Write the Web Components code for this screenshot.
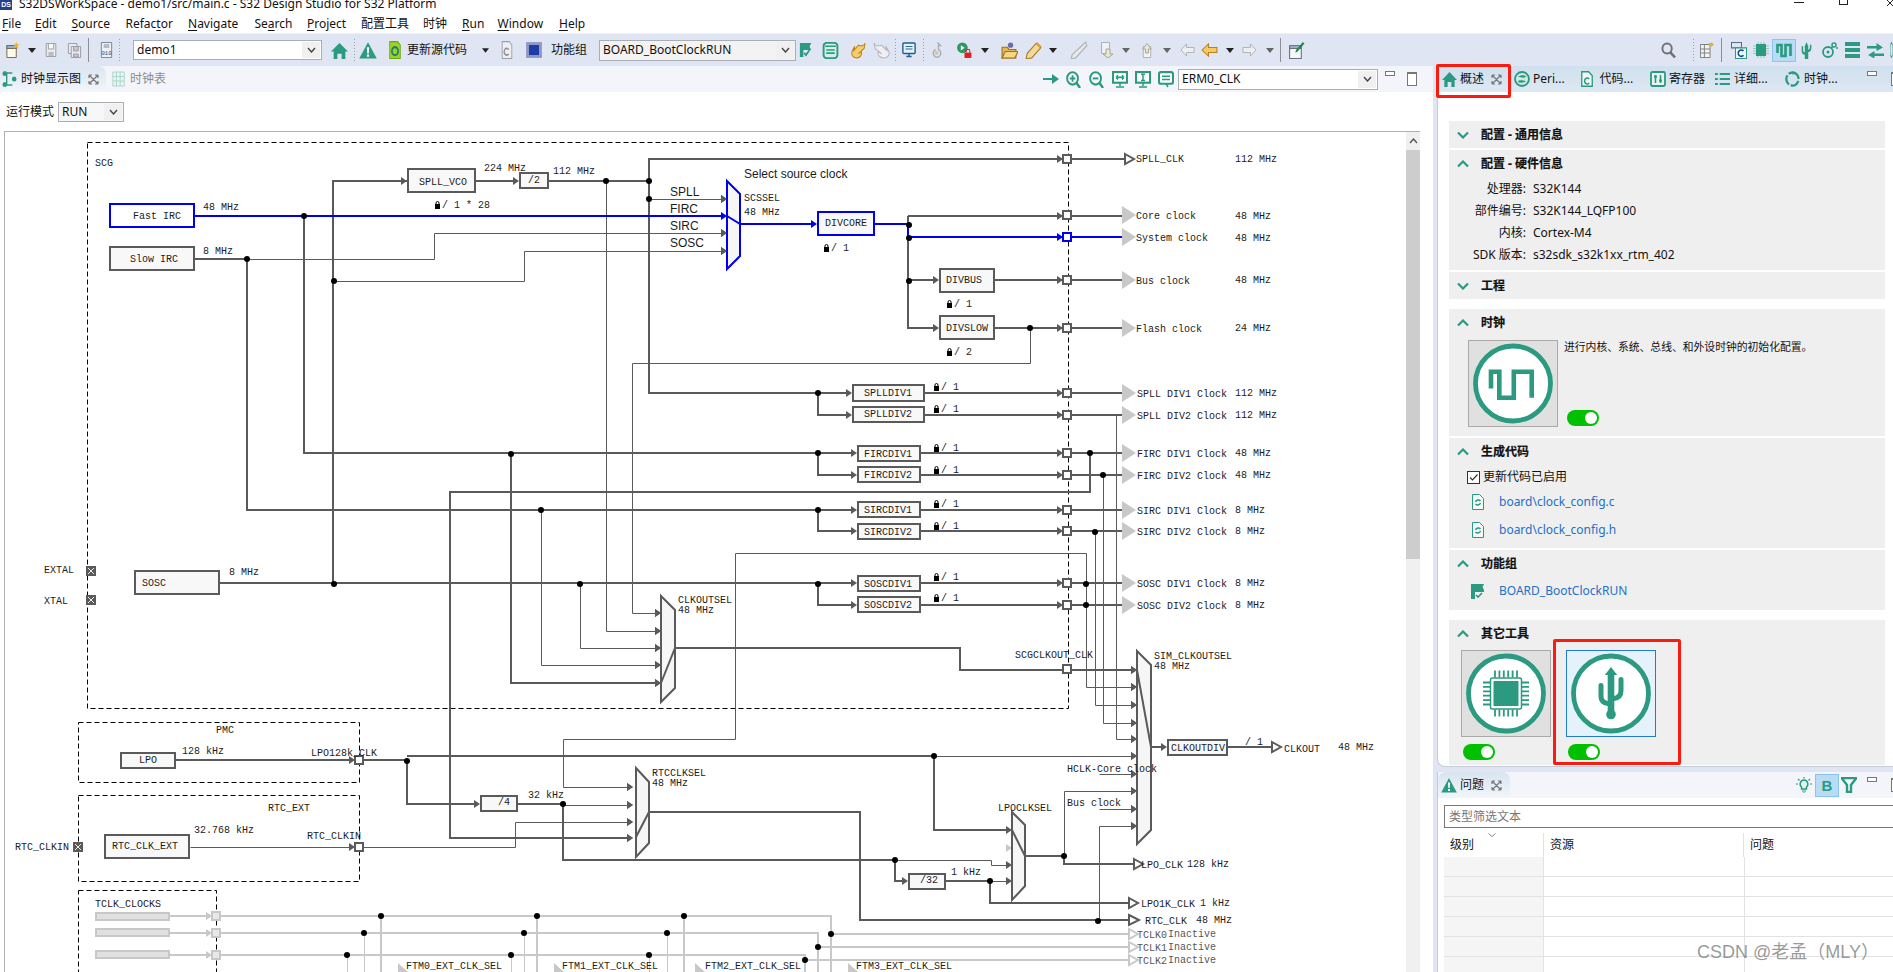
<!DOCTYPE html>
<html lang="zh">
<head>
<meta charset="utf-8">
<title>S32DS</title>
<style>
html{margin:0;padding:0;height:972px;overflow:hidden;background:#fff}
body{margin:0;padding:0;height:972px;overflow:hidden;font:12px/16px "Noto Sans","Noto Sans CJK SC",sans-serif;color:#111;display:flex;flex-direction:column}
</style>
</head>
<body>
<win-title></win-title>
<win-menu></win-menu>
<win-toolbar></win-toolbar>
<work-area>
  <clock-editor></clock-editor>
  <side-column>
    <overview-view></overview-view>
    <problems-view></problems-view>
  </side-column>
</work-area>
<script>
const T='#2b9a80';
const IC={
 newf:`<path d="M2 3.5h10v12H2z" fill="#fffbe8" stroke="#6f6a55"/><path d="M2 3.5h10v3H2z" fill="#8fb0d6" stroke="#6f6a55"/><path d="M12 0l1 2.3 2.4.5-1.9 1.5.5 2.4-2-1.3-2 1.3.5-2.4L8.600 2.800l2.400-.5z" fill="#efb21e"/>`,
 save:`<path d="M2.500 1.500h11v13h-11z" fill="#e9ebf0" stroke="#9a9da3"/><path d="M5 2v5h6V2" fill="#f8f8f8" stroke="#9a9da3"/><path d="M5 10h6v4H5z" fill="#b9bcc2"/>`,
 saveall:`<path d="M1.500 1.500h9v10h-9z" fill="#e9ebf0" stroke="#9a9da3"/><path d="M4.500 4.500h10v11h-10z" fill="#e9ebf0" stroke="#9a9da3"/><path d="M7 5v4h5V5M7 12h5v3H7z" fill="#c4c7cc" stroke="#9a9da3"/>`,
 bin:`<path d="M2.500 .5h11v15h-11z" fill="#eef0f6" stroke="#7c8593"/><path d="M5 3h6M5 5h6" stroke="#7c8593"/><text x="8" y="13" font-size="6" text-anchor="middle" fill="#1c4f7c" font-family="Liberation Mono">010</text>`,
 home:`<path d="M8 1L0 9h2.500v7H6v-5h4v5h3.500V9H16z" fill="${T}"/>`,
 warn:`<path d="M8 1l7.800 14.500H.2z" fill="${T}"/><path d="M7 5.500h2l-.3 5.500H7.300zM7 12h2v2H7z" fill="#fff"/>`,
 gen:`<path d="M2 .5h9l3 3v12H2z" fill="#9fd321" stroke="#6da30e"/><circle cx="8" cy="9" r="3.500" fill="none" stroke="#1f7f77" stroke-width="2"/>`,
 cdoc:`<path d="M2.500 .5h8l3 3v12h-11z" fill="#eceef2" stroke="#9c9fa5"/><path d="M10 7.500a3 3 0 1 0 0 4" fill="none" stroke="#8c8f96" stroke-width="1.500"/>`,
 chip:`<rect x=".5" y=".5" width="15" height="15" fill="#8f97c2" stroke="#767fb0" stroke-dasharray="1 1"/><rect x="3" y="3" width="10" height="10" fill="#1c3ca8"/>`,
 flag:`<path d="M1 1h13l-2 3.500 2 3.500H5v7H1z" fill="${T}"/><path d="M6 11l2 2 4-5" fill="none" stroke="${T}" stroke-width="2"/>`,
 db:`<rect x="1.500" y=".8" width="13" height="14.500" rx="3" fill="#d8ece8" stroke="${T}" stroke-width="1.800"/><path d="M3 4h10M4 7.500h8M4 10.500h8" stroke="${T}" stroke-width="1.500"/>`,
 hot:`<path d="M15 1C14 4 11 4 8 3L3 8l1-4-3 5c-1 4 2 6 5 6 4 0 6-3 5-6l-3 2 6-5z" fill="#f7cd6a" stroke="#b9801c"/>`,
 hotg:`<path d="M1 1c1 3 4 3 7 2l5 5-1-4 3 5c1 4-2 6-5 6-4 0-6-3-5-6l3 2-6-5z" fill="#eef0f4" stroke="#b4b7bc"/>`,
 mon:`<rect x="1" y="1" width="14" height="10.500" rx="1" fill="#e8f2f8" stroke="#1c5f94" stroke-width="1.600"/><path d="M4 4.500h8M4 7h8" stroke="#1c5f94"/><path d="M5 14.500h6M8 12v2" stroke="#1c5f94" stroke-width="1.600"/>`,
 dbg:`<path d="M8 .5l3 3H9v4a4 4 0 1 1-3 0" fill="none" stroke="#a9acb2" stroke-width="1.500"/><circle cx="7" cy="11" r="2" fill="#d6c49a"/>`,
 run:`<circle cx="6" cy="5.500" r="5" fill="#2c9a60"/><path d="M4.500 3l3.600 2.500L4.500 8z" fill="#fff"/><rect x="8" y="10" width="6.500" height="5" fill="#e01c24"/><path d="M9.500 10V8.500a1.700 1.700 0 0 1 3.500 0V10" fill="none" stroke="#e01c24"/>`,
 folder:`<path d="M1 5h5l1.500 2H14v8H1z" fill="#e7b854" stroke="#9a7020"/><path d="M1 15l3-6h12l-3 6z" fill="#f6d684" stroke="#9a7020"/><circle cx="9" cy="3" r="2.500" fill="#6c6aa8"/>`,
 pen:`<path d="M10 2l4 4-8 9-5 1 1-5z" fill="#f5d898" stroke="#a67c2a"/><path d="M11 1l4 4-2 1-3-3z" fill="#d9a034"/>`,
 peng:`<path d="M14 1l1 3-10 11-4 1 1-4z" fill="#e8e9ec" stroke="#b0b2b8"/>`,
 down:`<path d="M2.500 .5h8v11h-8z" fill="#f0f1f5" stroke="#aeb1b6"/><path d="M4 12l3 0 0-5h4v5h3l-5 4z" fill="#e8ead8" stroke="#a4a790"/>`,
 up:`<path d="M4.500 4.500h8v11h-8z" fill="#f0f1f5" stroke="#aeb1b6"/><path d="M7 7V11h3V7h3L8.500 1.500 4 7z" fill="#e8ead8" stroke="#a4a790"/>`,
 lg:`<path d="M1 8l6-6v3.500h8v5H7V14z" fill="#eeeff2" stroke="#aeb1b6"/>`,
 lo:`<path d="M1 8l6-6v3.500h8v5H7V14z" fill="#f7cb62" stroke="#b8801c"/>`,
 rg:`<path d="M15 8L9 2v3.500H1v5h8V14z" fill="#eeeff2" stroke="#aeb1b6"/>`,
 note:`<path d="M1.500 3.500h11v12h-11z" fill="#f6f8fb" stroke="#65707a"/><path d="M1.500 3.500h11v2.500h-11z" fill="#a9c2dc" stroke="#65707a"/><path d="M14 0l1.500 1.500L9 9l-2 1 .5-2.500z" fill="#1f8a4c"/>`,
 search:`<circle cx="6.500" cy="6.500" r="5" fill="none" stroke="#6f7072" stroke-width="2"/><path d="M10 10.500l5 5" stroke="#6f7072" stroke-width="2.500"/>`,
 pers:`<path d="M.5 2.500h11v13H.5z" fill="#f4f3ea" stroke="#7b7f84"/><path d="M.5 2.500h11M.5 7h11M.5 11h11M5 2.500v13" stroke="#7b7f84" fill="none"/><path d="M10 1h3V0l3 2.500L13 5V4h-3z" fill="#efb21e"/>`,
 cview:`<path d="M.5.5h10v5h-10z" fill="#dbe8f3" stroke="#546b80"/><path d="M4.500 5.500h11v10h-11z" fill="#eef4f9" stroke="${T}"/><path d="M12.500 8.500a3 3 0 1 0 0 4" fill="none" stroke="#0d4f8c" stroke-width="1.500"/>`,
 chipt:`<rect x="3" y="2" width="10" height="12" fill="${T}"/><path d="M0 4h3M0 6.500h3M0 9h3M0 11.500h3M13 4h3M13 6.500h3M13 9h3M13 11.500h3M5 0v2M8 0v2M11 0v2M5 14v2M8 14v2M11 14v2" stroke="#93c8ba"/>`,
 wave:`<path d="M1.500 11V3h4v11h4V3h5v11" fill="none" stroke="${T}" stroke-width="2.600"/>`,
 usb:`<path d="M5.500 16V4L8 0l2.500 4v12z" fill="${T}"/><path d="M2 4v4c0 2 2 3 4 3M14 2.500v3c0 2-2 3-4 3" fill="none" stroke="${T}" stroke-width="2.200"/>`,
 pins:`<circle cx="6" cy="10" r="5" fill="none" stroke="${T}" stroke-width="1.800"/><circle cx="6" cy="10" r="1.500" fill="${T}"/><circle cx="12" cy="3" r="2" fill="none" stroke="${T}" stroke-width="1.500"/><path d="M9 6l2-1.500M14 6h2" stroke="${T}" stroke-width="1.500"/>`,
 rows:`<path d="M0 0h16v4H0zM0 6h16v4H0zM0 12h16v4H0z" fill="${T}"/>`,
 arrows:`<path d="M0 4h9V1l6 4.500L9 9V6.500H0zM16 11.500H7V9l-6 4 6 3.500v-2.500h9z" fill="${T}"/>`,
 circ:`<circle cx="8" cy="8" r="7" fill="none" stroke="${T}" stroke-width="2"/>`,
 treeg:`<path d="M5 2h6M5 14h6M5 2v12" stroke="${T}" fill="none" stroke-width="1.500"/><circle cx="3" cy="2.500" r="2.500" fill="${T}"/><circle cx="3" cy="13.500" r="2.500" fill="${T}"/><circle cx="13" cy="8" r="2.500" fill="${T}"/>`,
 table:`<path d="M1 1h14v14H1zM1 5.500h14M1 10h14M5.500 1v14M10 1v14" fill="#eaf5f2" stroke="#a4d4c8"/>`,
 go:`<path d="M0 7h9V3l7 5-7 5V9H0z" fill="${T}"/>`,
 zin:`<circle cx="7" cy="7" r="5.800" fill="none" stroke="${T}" stroke-width="2"/><path d="M4 7h6M7 4v6" stroke="${T}" stroke-width="1.800"/><path d="M11 11l4 5" stroke="${T}" stroke-width="2.500"/>`,
 zout:`<circle cx="7" cy="7" r="5.800" fill="none" stroke="${T}" stroke-width="2"/><path d="M4 7h6" stroke="${T}" stroke-width="1.800"/><path d="M11 11l4 5" stroke="${T}" stroke-width="2.500"/>`,
 fith:`<rect x="1" y="1" width="14" height="10" fill="#fff" stroke="${T}" stroke-width="2"/><path d="M4 6h8M4 6l2-2M4 6l2 2M12 6l-2-2M12 6l-2 2M8 11v3M4 15h8" stroke="${T}" stroke-width="1.500" fill="none"/>`,
 fitv:`<rect x="1" y="1" width="14" height="10" fill="#fff" stroke="${T}" stroke-width="2"/><path d="M8 3v6M6 3h4M6 9h4M8 11v3M4 15h8" stroke="${T}" stroke-width="1.500" fill="none"/>`,
 fita:`<rect x="1" y="1" width="14" height="11" rx="2" fill="#fff" stroke="${T}" stroke-width="2"/><path d="M4 5h8M4 8h8M8 12l2 3" stroke="${T}" stroke-width="1.500" fill="none"/>`,
 peri:`<circle cx="8" cy="8" r="7" fill="#cfe7e1" stroke="${T}" stroke-width="1.800"/><path d="M4 6c2-2 6-2 8-1-1 3-5 1-8 1zM12 10c-2 2-6 2-8 1 1-3 5-1 8-1z" fill="${T}"/>`,
 code:`<path d="M2 .8h8l4 4v10.400H2z" fill="#eef5f3" stroke="${T}" stroke-width="1.500"/><path d="M10.500 8a3 3 0 1 0 0 4" fill="none" stroke="${T}" stroke-width="1.700"/>`,
 reg:`<rect x="1" y="1" width="14" height="14" rx="1.500" fill="#eaf5f2" stroke="${T}" stroke-width="1.800"/><path d="M5.500 4v8M10.500 4v8" stroke="${T}" stroke-width="1.600"/><circle cx="5.500" cy="5.500" r="1.500" fill="${T}"/><circle cx="10.500" cy="9.500" r="1.500" fill="${T}"/>`,
 list:`<path d="M0 2h3v2H0zM5 2h11v2H5zM0 7h3v2H0zM5 7h11v2H5zM0 12h3v2H0zM5 12h11v2H5z" fill="${T}"/>`,
 clk:`<path d="M8 1.500a6.500 6.500 0 1 1-.01 0z" fill="none" stroke="${T}" stroke-width="2.400" stroke-dasharray="10 2"/><path d="M8 0l2.500 2L8 4z" fill="${T}"/>`,
 bulb:`<path d="M8 3a4 4 0 0 0-2.500 7v2h5v-2A4 4 0 0 0 8 3z" fill="#e2f2ee" stroke="${T}" stroke-width="1.500"/><path d="M6 14h4M7 16h2M0 7h2M14 7h2M2 2l1.500 1.500M14 2l-1.500 1.500M8 0v1.500" stroke="${T}" stroke-width="1.200"/>`,
 funnel:`<path d="M.5 1h15L10 8v7H6V8z" fill="none" stroke="${T}" stroke-width="2.400"/>`
};
const ic=(n,w=16,h=16)=>`<svg width="${w}" height="${h}" viewBox="0 0 16 16" preserveAspectRatio="none" aria-hidden="true">${IC[n]}</svg>`;
const caret=`<svg width="8" height="5" viewBox="0 0 8 5"><path d="M0 0h8L4 5z" fill="#222"/></svg>`;
const caretg=`<svg width="8" height="5" viewBox="0 0 8 5"><path d="M0 0h8L4 5z" fill="#666"/></svg>`;
const grip=`<i style="display:block;width:1px;height:22px;background:repeating-linear-gradient(#9aa0a8 0 1px,transparent 1px 3px)"></i>`;
const sep=`<i style="display:block;width:1px;height:24px;background:#8a8f98"></i>`;
const minb=`<i style="display:block;width:8px;height:3px;border:1px solid #777;background:#fff;margin-top:-12px"></i>`;
const maxb=`<i style="display:block;width:8px;height:11px;border:1px solid #777;border-top-width:2px;background:#fff"></i>`;
const closex=`<svg width="11" height="11" viewBox="0 0 11 11"><path d="M1 1l9 9M10 1l-9 9M1 1h3M1 1v3M10 1H7M10 1v3M1 10h3M1 10V7M10 10H7M10 10V7" fill="none" stroke="#777" stroke-width="1.200"/></svg>`;
const place=(items,x0)=>{let c=x0;return items.map(([x,w,h,cl])=>{const m=x-c;c=x+w;return `<span class="it ${cl||''}" style="margin-left:${m}px;width:${w}px">${h}</span>`}).join('')};
const itcss=`.it{display:flex;align-items:center;justify-content:center;flex:none;white-space:nowrap}.tx{justify-content:flex-start}`;
function def(name,css,html){customElements.define(name,class extends HTMLElement{connectedCallback(){if(this.shadowRoot)return;const r=this.attachShadow({mode:'open'});r.innerHTML=`<style>${css}</style>`+(typeof html==='function'?html(this):html);}});}

def('win-title',`:host{display:flex;height:14px;line-height:8px;align-items:flex-start;flex:none;position:relative}
.ico{width:12px;height:10px;background:#23408e;color:#fff;font:bold 7px/9px "Liberation Sans",sans-serif;text-align:center;flex:none}
.t{margin-left:7px;white-space:nowrap;flex:none}
.b{position:absolute;top:0}
.m{left:1794px;top:2px;width:10px;height:1px;background:#222}.x{left:1839px;width:7px;height:4px;border:1px solid #222;border-top:0}.c{left:1887px}`,
`<span class="ico">DS</span><span class="t">S32DSWorkSpace - demo1/src/main.c - S32 Design Studio for S32 Platform</span><i class="b m"></i><i class="b x"></i><svg class="b c" width="6" height="6" viewBox="0 0 6 6"><path d="M0 0l6 6M6 0L0 6" stroke="#222" fill="none"/></svg>`);

def('win-menu',`:host{display:flex;height:19px;flex:none;box-sizing:border-box;line-height:22px;background:#fff;align-items:flex-start}
${itcss}.it{height:19px}u{text-decoration-thickness:1px;text-underline-offset:2px}`,
()=>place([[2,19,'<span><u>F</u>ile</span>','tx'],[35,22,'<span><u>E</u>dit</span>','tx'],[71.5,40,'<span><u>S</u>ource</span>','tx'],[125.5,48,'<span>Refac<u>t</u>or</span>','tx'],[188,52,'<span><u>N</u>avigate</span>','tx'],[254.5,38,'<span>Se<u>a</u>rch</span>','tx'],[307,40,'<span><u>P</u>roject</span>','tx'],[361,48,'<span>配置工具</span>','tx'],[423,24,'<span>时钟</span>','tx'],[462,22,'<span><u>R</u>un</span>','tx'],[497.6,47,'<span><u>W</u>indow</span>','tx'],[559,27,'<span><u>H</u>elp</span>','tx']],0));

def('combo-box',`:host{display:flex;box-sizing:border-box;border:1px solid #a9adb4;background:var(--bg,#fff);align-items:stretch;line-height:18px}
.v{flex:1;padding-left:3px;white-space:nowrap;overflow:hidden;align-self:center}
.a{width:18px;background:#f0f0f0;display:flex;align-items:center;justify-content:center;margin:1px}`,
h=>`<span class="v">${h.getAttribute('value')}</span><span class="a"><svg width="9" height="6" viewBox="0 0 9 6"><path d="M1 1l3.500 4L8 1" fill="none" stroke="#444" stroke-width="1.400"/></svg></span>`);

def('win-toolbar',`:host{display:flex;height:33px;background:#dfe5f3;border-top:1px solid #eef0f6;box-sizing:border-box;align-items:center;flex:none}
${itcss}.sel{background:#b8dcf5;outline:1px solid #8cc4ec;height:21px}`,
()=>place([
[5,15,ic('newf',15,16)],[28,8,caret],[44,14,ic('save',14,16)],[67,15,ic('saveall',15,16)],[88,1,sep],[99,15,ic('bin',15,16)],[119,1,grip],
[133,189,`<combo-box value="demo1" style="width:189px;height:20px"></combo-box>`],
[331,17,ic('home',17,17)],[354,1,grip],[359,18,ic('warn',18,18)],[388,14,ic('gen',14,18)],[407,60,'更新源代码','tx'],[482,7,caret],[500,14,ic('cdoc',14,18)],[526,16,ic('chip')],
[551,37,'功能组','tx'],[599,197,`<combo-box value="BOARD_BootClockRUN" style="width:197px;height:21px;--bg:#f3f3f3"></combo-box>`],
[799,14,ic('flag',14,16)],[822,17,ic('db',17,17)],[851,15,ic('hot',15,17)],[873,17,ic('hotg',17,17)],[895,1,grip],[902,14,ic('mon',14,16)],[923,1,grip],[930,15,ic('dbg')],
[956,17,ic('run',17,17)],[981,8,caret],[1001,17,ic('folder',17,17)],[1025,18,ic('pen',18,18)],[1049,8,caret],[1069,20,ic('peng',18,18)],[1099,16,ic('down')],[1122,8,caretg],[1139,15,ic('up')],[1163,8,caretg],[1180,15,ic('lg')],[1201,17,ic('lo',17,16)],[1226,8,caret],[1242,15,ic('rg')],[1266,8,caretg],[1280,1,sep],[1288,17,ic('note',17,17)],
[1661,15,ic('search')],[1693,1,grip],[1700,14,ic('pers',15,16)],[1721,1,sep],[1730,17,ic('cview',16,17)],[1753,16,ic('chipt')],[1773,22,ic('wave'),'sel'],[1801,11,ic('usb',11,17)],[1822,16,ic('pins')],[1845,15,ic('rows',15,16)],[1867,17,ic('arrows',17,16)],[1890,3,ic('circ',3,16)]
],0));

def('work-area',`:host{display:flex;flex:1;min-height:0;background:#dfe5f3}`,`<slot></slot>`);
def('side-column',`:host{display:flex;flex-direction:column;width:456px;margin-left:4px;flex:none;min-height:0}`,`<slot></slot>`);

/* ---------- clock diagram ---------- */
def('clock-diagram',`:host{display:block;flex:1;min-width:0;overflow:hidden}
svg{display:block}
text{font:10.500px "Liberation Mono",monospace;fill:#1c1c1c;white-space:pre}
text.s{font:12px "Liberation Sans",sans-serif}
text.g{fill:#555}`,()=>{
 const G='#5a5a5a',B='#0000ee',LG='#c8c8c8';let o='';
 const snap=(v,w)=>w%2?Math.floor(v)+.5:Math.round(v);
 const pl=(p,w=2,c=G)=>{o+=`<polyline fill="none" stroke="${c}" stroke-width="${w}" stroke-linejoin="miter" points="${p.map(([x,y])=>snap(x,w)+','+snap(y,w)).join(' ')}"/>`;};
 const thin=(p,c)=>pl(p,1,c);
 const ar=(x,y,c=G)=>{y=Math.round(y);o+=`<polygon fill="${c}" points="${x-6},${y-4} ${x},${y} ${x-6},${y+4}"/>`;};
 const dot=(x,y)=>{o+=`<circle cx="${x}" cy="${y}" r="3" fill="#000"/>`;};
 const port=(x,y,c=G,f='#fff')=>{o+=`<rect x="${Math.round(x)-4}" y="${Math.round(y)-4}" width="8" height="8" fill="${f}" stroke="${c}" stroke-width="2"/>`;};
 const t=(x,y,s,cl='')=>{const len=cl==='s'?'':` textLength="${s.length*6}" lengthAdjust="spacingAndGlyphs"`;o+=`<text x="${x}" y="${y+3.5}" class="${cl}"${len}>${s}</text>`;};
 const box=(x1,y1,x2,y2,c=G,f='#f8f8f8')=>{o+=`<rect x="${x1+1}" y="${y1+1}" width="${x2-x1-2}" height="${y2-y1-2}" fill="${f}" stroke="${c}" stroke-width="2"/>`;};
 const dash=(x,y,w,h)=>{o+=`<rect x="${x+.5}" y="${y+.5}" width="${w}" height="${h}" fill="none" stroke="#000" stroke-dasharray="5 3"/>`;};
 const mux=(x1,x2,a,b,c,d,s,e,col=G)=>{o+=`<polygon points="${x1},${a} ${x2},${b} ${x2},${c} ${x1},${d}" fill="#f6f6f6" stroke="${col}" stroke-width="2"/><line x1="${x1}" y1="${s}" x2="${x2}" y2="${e}" stroke="${col}" stroke-width="2"/>`;};
 const lock=(x,y,s)=>{o+=`<rect x="${x}" y="${y-2}" width="5" height="5" fill="#000"/><path d="M${x+1} ${y-2}v-1a1.500 1.500 0 0 1 3 0v1" fill="none" stroke="#000"/>`;t(x+7,y-2,s);};
 const triG=(y,c=LG)=>{o+=`<polygon fill="${c}" points="1122,${y-9} 1136,${y} 1122,${y+9}"/>`;};
 const hol=(x1,x2,y,c=G)=>{o+=`<polygon fill="#fff" stroke="${c}" stroke-width="2" points="${x1},${y-5} ${x2},${y} ${x1},${y+5}"/>`;};

 /* frames */
 dash(87,142,981,566);dash(78,722,281,60);dash(78,795,281,86);dash(78,890,138,100);
 t(95,162,'SCG');t(216,729,'PMC');t(268,807,'RTC_EXT');t(95,903,'TCLK_CLOCKS');

 /* thin background routes */
 thin([[247,259],[434,259],[434,233],[722,233]]);ar(727,233);
 thin([[334,281],[524,281],[524,251],[722,251]]);ar(727,251);
 thin([[649,199],[722,199]]);ar(727,199);
 thin([[606,181],[606,631],[655,631]]);ar(661,631);
 thin([[1030,328],[1030,363],[632,363],[632,613],[655,613]]);ar(661,613);
 thin([[541,510],[541,665],[655,665]]);ar(661,665);
 thin([[580,583],[580,648],[655,648]]);ar(661,648);
 thin([[735,739],[735,553],[1086,553],[1086,687],[1131,687]]);ar(1137,687);
 thin([[735,739],[563,739],[563,787],[628,787]]);ar(633,787);
 thin([[1095,532],[1095,705],[1131,705]]);ar(1137,705);
 thin([[1103,475],[1103,723],[1131,723]]);ar(1137,723);
 thin([[1116,414],[1116,739],[1131,739]]);ar(1137,739);
 thin([[934,756],[1131,756]]);ar(1137,756);
 thin([[1099,774],[1131,774]]);ar(1137,774);
 thin([[1064,856],[1064,791],[1131,791]]);ar(1137,791);
 thin([[1099,809],[1131,809]]);ar(1137,809);
 thin([[1099,921],[1099,826],[1131,826]]);ar(1137,826);
 thin([[190,847],[353,847]]);ar(355,847);port(359,847);thin([[363,847],[515,847],[515,822],[628,822]]);ar(633,822);

 /* thick routes */
 pl([[195,259],[247,259],[247,510],[852,510]]);
 pl([[304,216],[304,453],[852,453]]);
 pl([[407,181],[333,181],[333,583],[852,583]]);ar(407,181);
 pl([[476,181],[514,181]]);ar(519,181);pl([[549,181],[649,181]]);
 pl([[1063,159],[649,159],[649,393],[847,393]]);
 pl([[818,393],[818,415],[847,415]]);pl([[818,453],[818,475],[852,475]]);pl([[818,510],[818,531],[852,531]]);pl([[818,583],[818,605],[852,605]]);
 pl([[511,453],[511,683],[655,683]]);ar(661,683);
 pl([[1090,453],[1090,492],[450,492],[450,838],[628,838]]);ar(633,838);
 pl([[674,648],[960,648],[960,670],[1063,670]]);pl([[1071,670],[1131,670]]);ar(1137,670);
 pl([[176,760],[353,760]]);ar(355,760);port(359,760);pl([[363,760],[407,760],[407,804],[474,804]]);ar(480,804);
 pl([[407,756],[934,756],[934,830],[1006,830]]);ar(1012,830);
 pl([[518,804],[563,804],[563,860],[895,860]]);thin([[895,860],[991,860],[991,865],[1006,865]]);ar(1012,865);
 thin([[563,805],[628,805]]);ar(633,805);
 pl([[895,860],[895,881],[903,881]]);ar(908,881);pl([[946,881],[990,881]]);thin([[990,881],[1006,881]]);ar(1012,881);ar(1012,848,LG);
 pl([[990,881],[990,903],[1128,903]]);
 pl([[1025,856],[1064,856],[1064,864],[1133,864]]);
 pl([[649,812],[860,812],[860,920],[1129,920]]);
 pl([[220,583],[333,583]]);

 /* blue path */
 pl([[195,216],[722,216]],2,B);ar(727,216,B);
 mux(727,740,181,194,256,269,216,224,B);
 ar(727,199);ar(727,233);ar(727,251);
 pl([[740,224],[812,224]],2,B);ar(817,224,B);
 pl([[874,224],[908,224],[908,237],[1063,237]],2,B);ar(1063,237,B);pl([[1071,237],[1122,237]],2,B);port(1067,237,B);
 pl([[908,216],[908,224]]);pl([[908,237],[908,328],[934,328]]);pl([[908,280],[933,280]]);ar(939,280);ar(939,328);
 pl([[908,216],[1063,216]]);

 /* boxes */
 box(109,203,195,228,B,'#fff');t(133,215,'Fast IRC');t(203,206,'48 MHz');
 box(109,246,195,271);t(130,258,'Slow IRC');t(203,250,'8 MHz');
 box(407,168,476,193);t(419,181,'SPLL_VCO');t(484,167,'224 MHz');lock(435,206,'/ 1 * 28');
 box(519,172,549,189);t(528,179,'/2');t(553,170,'112 MHz');
 t(670,192,'SPLL','s');t(670,209,'FIRC','s');t(670,226,'SIRC','s');t(670,243,'SOSC','s');
 t(744,174,'Select source clock','s');t(744,197,'SCSSEL');t(744,211,'48 MHz');
 box(817,211,875,236,B);t(825,222,'DIVCORE');lock(824,249,'/ 1');
 box(939,268,995,293);t(946,279,'DIVBUS');lock(947,305,'/ 1');
 box(939,315,995,340);t(946,327,'DIVSLOW');lock(947,353,'/ 2');
 pl([[995,280],[1063,280]]);pl([[995,328],[1063,328]]);

 /* output rows */
 ar(1063,159);port(1067,159);pl([[1071,159],[1124,159]]);hol(1125,1134,159);t(1136,158,'SPLL_CLK');t(1235,158,'112 MHz');
 ar(1063,216);port(1067,215);pl([[1071,216],[1122,216]]);triG(215);t(1136,215,'Core clock');t(1235,215,'48 MHz');
 triG(237);t(1136,237,'System clock');t(1235,237,'48 MHz');
 ar(1063,280);port(1067,280);pl([[1071,280],[1122,280]]);triG(280);t(1136,280,'Bus clock');t(1235,279,'48 MHz');
 ar(1063,328);port(1067,328);pl([[1071,328],[1122,328]]);triG(328);t(1136,328,'Flash clock');t(1235,327,'24 MHz');
 const dv=[
  [852,925,384,402,392,393,'SPLLDIV1',934,388,'SPLL DIV1 Clock','112 MHz'],
  [852,925,406,423,413,415,'SPLLDIV2',934,410,'SPLL DIV2 Clock','112 MHz'],
  [857,921,445,462,453,453,'FIRCDIV1',934,449,'FIRC DIV1 Clock','48 MHz'],
  [857,921,466,483,474,475,'FIRCDIV2',934,471,'FIRC DIV2 Clock','48 MHz'],
  [857,921,501,518,509,510,'SIRCDIV1',934,505,'SIRC DIV1 Clock','8 MHz'],
  [857,921,523,540,531,531,'SIRCDIV2',934,527,'SIRC DIV2 Clock','8 MHz'],
  [857,921,575,592,583,583,'SOSCDIV1',934,578,'SOSC DIV1 Clock','8 MHz'],
  [857,921,596,613,604,605,'SOSCDIV2',934,599,'SOSC DIV2 Clock','8 MHz']];
 dv.forEach(([a,b,y1,y2,ty,ly,n,lx,ly2,lab,f])=>{ar(a,ly);box(a,y1,b,y2);t(864,ty,n);lock(lx,ly2,'/ 1');pl([[b,ly],[1058,ly]]);ar(1063,ly);port(1067,ly);pl([[1071,ly],[1122,ly]]);triG(ly);t(1137,ly,lab);t(1235,ly-1,f);});
 port(1067,669);

 /* muxes */
 mux(661,675,596,610,688,702,683,648);t(678,599,'CLKOUTSEL');t(678,609,'48 MHz');
 ar(661,613);ar(661,631);ar(661,648);ar(661,665);ar(661,683);
 mux(1137,1151,651,665,830,844,670,747);t(1154,655,'SIM_CLKOUTSEL');t(1154,665,'48 MHz');
 [670,687,705,723,739,756,774,791,809,826].forEach(y=>ar(1137,y));
 mux(636,649,768,782,843,857,837,812);t(652,772,'RTCCLKSEL');t(652,782,'48 MHz');
 [787,805,822,838].forEach(y=>ar(633,y));
 mux(1012,1025,812,825,886,900,830,856);t(998,807,'LPOCLKSEL');

 t(1015,654,'SCGCLKOUT_CLK');t(1067,768,'HCLK-Core clock');t(1067,802,'Bus clock');

 /* clkout */
 pl([[1151,747],[1161,747]]);ar(1167,747);box(1167,739,1228,756);t(1171,747,'CLKOUTDIV');t(1245,741,'/ 1');pl([[1228,747],[1271,747]]);hol(1272,1281,747);t(1284,748,'CLKOUT');t(1338,746,'48 MHz');

 /* SOSC etc. */
 box(134,570,220,595);t(142,582,'SOSC');t(229,571,'8 MHz');
 t(44,569,'EXTAL');t(44,600,'XTAL');
 [[86,566],[86,595]].forEach(([x,y])=>{o+=`<rect x="${x}" y="${y}" width="10" height="10" fill="#5a5a5a"/><path d="M${x+2} ${y+2}l6 6M${x+8} ${y+2}l-6 6" stroke="#eee"/>`;});
 t(15,846,'RTC_CLKIN');o+=`<rect x="73" y="842" width="10" height="10" fill="#5a5a5a"/><path d="M75 844l6 6M81 844l-6 6" stroke="#eee"/>`;
 box(120,752,176,769);t(139,759,'LPO');t(182,750,'128 kHz');t(311,752,'LPO128k_CLK');
 box(104,834,190,859);t(112,845,'RTC_CLK_EXT');t(194,829,'32.768 kHz');t(307,835,'RTC_CLKIN');
 box(480,795,518,812);t(498,801,'/4');t(528,794,'32 kHz');
 box(908,873,946,890);t(920,879,'/32');t(951,871,'1 kHz');
 hol(1134,1143,864);t(1141,864,'LPO_CLK');t(1187,863,'128 kHz');
 hol(1129,1138,903);t(1141,903,'LPO1K_CLK');t(1200,902,'1 kHz');
 hol(1129,1139,920);t(1145,920,'RTC_CLK');t(1196,919,'48 MHz');

 /* TCLK */
 [[912,916,831],[928,933,818],[950,955,805]].forEach(([by,y,x])=>{box(95,by,170,by+9,LG,'#e0e0e0');pl([[170,y],[210,y]],2,LG);ar(212,y,LG);pl([[220,y],[x,y],[x,972]],2,LG);port(216,y,LG,'#e8e8e8');});
 [[381,2],[537,2],[684,2]].forEach(([x])=>pl([[x,916],[x,972]],2,LG));
 [364,524,667].forEach(x=>thin([[x,933],[x,972]],LG));
 [347,511,649].forEach(x=>thin([[x,955],[x,972]],LG));
 [[831,934],[818,947],[805,960]].forEach(([x,y],i)=>{pl([[x,y],[1128,y]],2,LG);hol(1129,1138,y,LG);dot(x,y);t(1137,y,'TCLK'+i,'g');t(1168,y-1,'Inactive','g');});
 [[398,406,'FTM0'],[554,562,'FTM1'],[695,705,'FTM2'],[848,856,'FTM3']].forEach(([a,b,n])=>{o+=`<polygon fill="${LG}" points="${a},963 ${a+10},972 ${a},972"/>`;t(b,965,n+'_EXT_CLK_SEL');});

 /* dots */
 [[304,216],[247,259],[334,281],[606,181],[649,181],[649,199],[909,225],[909,238],[909,281],[1030,328],
  [818,393],[818,453],[1090,453],[1103,475],[818,510],[1095,532],[511,454],[541,510],[334,584],[580,584],[818,584],[1086,584],[1086,605],
  [407,761],[563,804],[934,756],[895,860],[990,881],[1064,856],[1098,921],
  [381,916],[537,916],[684,916],[364,933],[524,933],[667,933],[347,955],[511,955],[649,955]].forEach(([x,y])=>dot(x,y));

 return `<svg width="1401" height="840" viewBox="5 132 1401 840">${o}</svg>`;
});

def('diagram-scroll',`:host{display:flex;flex-direction:column;width:14px;flex:none;background:#f0f0f0}
.u{height:18px;background:#f0f0f0;display:flex;align-items:center;justify-content:center}
.th{height:409px;background:#cdcdcd}`,
`<div class="u"><svg width="9" height="6" viewBox="0 0 9 6"><path d="M1 5l3.500-4L8 5" fill="none" stroke="#555" stroke-width="1.400"/></svg></div><div class="th"></div>`);

def('clock-editor',`:host{display:flex;flex-direction:column;width:1433px;background:#fff;flex:none;min-height:0}
${itcss}
.tabs{height:26px;background:#f3f5fb;display:flex;align-items:center;flex:none;position:relative}
.active{position:absolute;left:0;top:0;width:106px;height:26px;background:linear-gradient(#dbe5f0,#f3f5fb);border-radius:0 8px 0 0}
.it{position:relative}.gray{color:#8d8d8d}
.mode{height:39px;display:flex;align-items:center;padding-left:6px;gap:1px;flex:none;padding-top:0}
.frame{flex:1;display:flex;margin-left:4px;margin-right:13px;border-left:1px solid #b0b0b0;border-top:1px solid #b0b0b0;min-height:0}
`,
()=>`<div class="tabs"><i class="active"></i>${place([[2,15,ic('treeg',15,16)],[21,60,'时钟显示图','tx'],[88,11,closex],[112,13,ic('table',13,16)],[130,36,'时钟表','tx gray'],
[1043,16,ic('go')],[1066,15,ic('zin',15,17)],[1089,15,ic('zout',15,17)],[1112,16,ic('fith',16,17)],[1135,16,ic('fitv',16,17)],[1158,16,ic('fita',16,17)],
[1178,200,`<combo-box value="ERM0_CLK" style="width:200px;height:21px"></combo-box>`],[1385,10,minb],[1407,10,maxb]],0)}</div>
<div class="mode"><span>运行模式</span><combo-box value="RUN" style="width:66px;height:20px;margin-left:3px;--bg:#f7f7f7"></combo-box></div>
<div class="frame"><clock-diagram></clock-diagram><diagram-scroll></diagram-scroll></div>`);

/* ---------- right side ---------- */
def('ov-section',`:host{display:block;background:#efefef;box-sizing:border-box;overflow:visible;position:relative}
.h{height:27px;display:flex;align-items:center;font-weight:700;padding-left:8px;-webkit-text-stroke:.2px #111}
.h svg{margin-right:12px}`,
h=>`<div class="h"><svg width="12" height="8" viewBox="0 0 12 8"><path d="${h.hasAttribute('open')?'M1 6.500l5-5 5 5':'M1 1.500l5 5 5-5'}" fill="none" stroke="${T}" stroke-width="2.200"/></svg><span>${h.getAttribute('label')}</span></div><slot></slot>`);

def('slide-toggle',`:host{display:block;width:32px;height:16px;border-radius:8px;background:#00c000;position:relative;flex:none}
i{position:absolute;right:2px;top:2px;width:12px;height:12px;border-radius:50%;background:#fff}`,`<i></i>`);

def('tool-tile',`:host{display:block;box-sizing:border-box;width:90px;height:87px;border:1px solid #a9a9a9;background:#e0e0e0;flex:none}
:host([sel]){border-color:#1e7cd8;background:#e5f1fb}svg{display:block}`,
h=>{const k=h.getAttribute('kind');let g='';
 if(k==='wave')g=`<path d="M-22 5V-11.700H-13.700V14.300H.8V-11.700H18.700V14.300" fill="none" stroke="${T}" stroke-width="4.600"/>`;
 if(k==='chip'){g=`<rect x="-12.500" y="-12.500" width="25" height="25" fill="${T}"/><rect x="-15.500" y="-15.500" width="31" height="31" rx="2" fill="none" stroke="${T}" stroke-width="1.500"/>`;
  for(const v of [-11,-6.600,-2.200,2.200,6.600,11])g+=`<path d="M${v} -23v7M${v} 16v7M-23 ${v}h7M16 ${v}h7" stroke="${T}" stroke-width="1.800"/>`;}
 if(k==='usb')g=`<path d="M0-26.500L6.200-18.500H3.300V21H-3.300V-18.500H-6.200z" fill="${T}"/><circle cy="21" r="4.800" fill="${T}"/><path d="M-10-8V3Q-10 9-3 10M10-14V-3Q10 4 3 5" fill="none" stroke="${T}" stroke-width="5" stroke-linecap="round"/>`;
 return `<svg width="88" height="85" viewBox="-44 -42.500 88 85"><circle r="37.500" fill="#fff" stroke="${T}" stroke-width="4.800"/>${g}</svg>`;});

def('view-tab-mark',`:host{position:absolute;box-sizing:border-box;border:3px solid #fa1c10;border-radius:2px;pointer-events:none;display:block}`,``);

def('overview-view',`:host{display:flex;flex-direction:column;height:701px;flex:none;background:#fff;border-left:1px solid #c5ccd8;border-bottom:1px solid #c5ccd8;border-radius:0 0 0 8px;box-sizing:border-box;position:relative}
${itcss}.it{position:relative}
.tabs{height:26px;background:linear-gradient(#d0e0ee,#dde8f2);display:flex;align-items:center;flex:none}
.body{padding:29px 8px 0 11px;flex:1}
ov-section{display:block}
.hw{display:grid;grid-template-columns:77px 1fr;column-gap:7px;grid-auto-rows:22px;align-items:center;padding-top:1px}
.hw b{font-weight:400;text-align:right;white-space:nowrap}
.clk{display:flex;margin:4px 0 0 19px}
.clk .r{display:flex;flex-direction:column;justify-content:space-between;margin-left:6px;padding-bottom:1px}
.clk .d{font-size:10.800px;line-height:14px}
.chk{display:flex;align-items:center;height:16px;margin:4px 0 3px 18px}
.chk i{box-sizing:border-box;width:13px;height:13px;border:1px solid #333;background:#fff;display:flex;margin-right:3px}
.lnk{display:flex;align-items:center;height:28px;margin-left:23px;color:#2470c8}
.lnk svg{margin-right:15px;flex:none}
.tools{display:flex;margin:3px 0 0 12px;gap:15px;position:relative}
.tool slide-toggle{margin:7px 0 0 2px}
view-tab-mark.a{left:-5px;top:-7px;width:75px;height:34px}
view-tab-mark.b{left:-13px;top:-11px;width:128px;height:126px}
.tool{position:relative}`,
()=>{const fileIc=`<svg width="12" height="16" viewBox="0 0 12 16"><path d="M.5.5h7l4 4v11H.5z" fill="#f4faf8" stroke="${T}"/><path d="M8.500 7a3 3 0 0 0-5 1M3.500 10a3 3 0 0 0 5-1" fill="none" stroke="${T}" stroke-width="1.500"/></svg>`;
 const flagIc=`<svg width="13" height="15" viewBox="0 0 13 15" style="margin-right:15px"><path d="M0 0h13l-1.500 3 1.500 3v2H4v7H0z" fill="${T}"/><path d="M5 11l2 2 4-4" fill="none" stroke="${T}" stroke-width="1.600"/></svg>`;
 return `<div class="tabs">${place([[3,16,ic('home',15,16)+'<view-tab-mark class="a"></view-tab-mark>'],[22,25,'概述','tx'],[53,11,closex],[76,16,ic('peri')],[95,32,'Peri...','tx'],[142,14,ic('code',14,16)],[161.500,33,'代码...','tx'],[212,16,ic('reg')],[231,36,'寄存器','tx'],[277,15,ic('list',15,16)],[296,33,'详细...','tx'],[347,15,ic('clk')],[366,34,'时钟...','tx'],[429,10,minb],[453,3,maxb]],0)}</div>
 <div class="body">
  <ov-section label="配置 - 通用信息" style="height:27px;margin-bottom:2px"></ov-section>
  <ov-section label="配置 - 硬件信息" open style="height:120px;margin-bottom:2px"><div class="hw"><b>处理器:</b><span>S32K144</span><b>部件编号:</b><span>S32K144_LQFP100</span><b>内核:</b><span>Cortex-M4</span><b>SDK 版本:</b><span>s32sdk_s32k1xx_rtm_402</span></div></ov-section>
  <ov-section label="工程" style="height:27px;margin-bottom:10px"></ov-section>
  <ov-section label="时钟" open style="height:127px;margin-bottom:2px"><div class="clk"><tool-tile kind="wave"></tool-tile><div class="r"><span class="d">进行内核、系统、总线、和外设时钟的初始化配置。</span><slide-toggle style="margin-left:3px"></slide-toggle></div></div></ov-section>
  <ov-section label="生成代码" open style="height:110px;margin-bottom:2px"><div class="chk"><i><svg width="11" height="11" viewBox="0 0 11 11"><path d="M2 5.500l2.500 2.500L9.500 2.500" fill="none" stroke="#333" stroke-width="1.200"/></svg></i>更新代码已启用</div><div class="lnk">${fileIc}board\\clock_config.c</div><div class="lnk">${fileIc}board\\clock_config.h</div></ov-section>
  <ov-section label="功能组" open style="height:60px;margin-bottom:10px"><div class="lnk" style="margin-left:22px;height:28px">${flagIc}BOARD_BootClockRUN</div></ov-section>
  <ov-section label="其它工具" open style="height:145px"><div class="tools"><div class="tool"><tool-tile kind="chip"></tool-tile><slide-toggle></slide-toggle></div><div class="tool"><tool-tile kind="usb" sel></tool-tile><slide-toggle></slide-toggle><view-tab-mark class="b"></view-tab-mark></div></div></ov-section>
 </div>`;});

def('problems-view',`:host{display:flex;flex-direction:column;flex:1;margin-top:5px;background:#fff;border-left:1px solid #c5ccd8;position:relative;min-height:0;overflow:hidden}
${itcss}.it{position:relative}
.tabs{height:26px;background:#f3f5fb;display:flex;align-items:center;position:relative;flex:none}
.act{position:absolute;left:0;top:0;width:72px;height:26px;background:linear-gradient(#d8e4f0,#f3f5fb);border-radius:8px 8px 0 0}
.b{height:21px;background:#b8dcf5;outline:1px solid #8cc4ec;color:${T};font:bold 15px "Liberation Sans",sans-serif}
.inp{margin:7px 0 0 6px;height:23px;box-sizing:border-box;border:1px solid #777;border-right:0;color:#777;padding-left:4px;line-height:21px;flex:none}
.hd{display:flex;height:29px;margin-left:6px;flex:none;position:relative}
.hd span{display:flex;align-items:flex-end;padding:0 0 4px 6px;box-sizing:border-box;height:29px}
.hd span+span{border-left:1px solid #e2e2e2;margin-top:5px;height:24px}
.sort{position:absolute;left:44px;top:5px}
.c1{width:99px}.c2{width:200px}.c3{flex:1}
.rw{display:flex;height:20px;margin-left:6px;box-sizing:border-box;border-bottom:1px solid #e2e2e2;flex:none}
.rw .c1{background:#f5f5f5}.rw .c2,.rw .c3{border-left:1px solid #e2e2e2}
.wm{position:absolute;right:14px;bottom:9px;color:rgba(120,120,120,.75);font:18px/22px "Liberation Sans","Noto Sans CJK SC",sans-serif;white-space:nowrap}`,
()=>`<div class="tabs"><i class="act"></i>${place([[3,16,ic('warn',16,16)],[22,25,'问题','tx'],[53,11,closex],[357,17,ic('bulb',16,16)],[378,22,'B','b'],[403,16,ic('funnel')],[429,10,minb],[453,3,maxb]],0)}</div>
<div class="inp">类型筛选文本</div>
<div class="hd"><span class="c1">级别</span><span class="c2">资源</span><span class="c3">问题</span><svg class="sort" width="8" height="4" viewBox="0 0 8 4"><path d="M.5.5L4 3.500 7.500.5" fill="none" stroke="#888"/></svg></div>
${'<div class="rw"><i class="c1"></i><i class="c2"></i><i class="c3"></i></div>'.repeat(6)}
<div class="wm">CSDN @老孟（MLY）</div>`);
</script>
</body>
</html>
